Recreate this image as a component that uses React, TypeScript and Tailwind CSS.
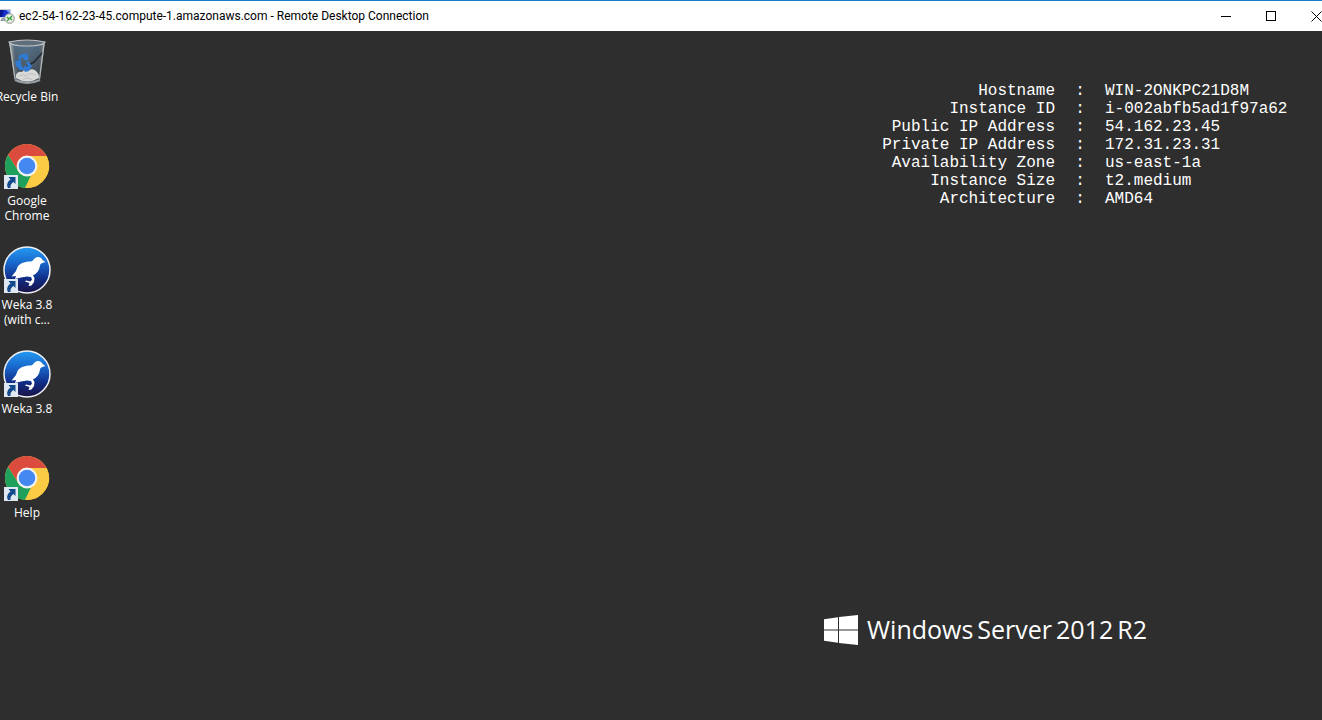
import type { ReactNode } from 'react';

const instanceInfo = [
  { label: 'Hostname', value: 'WIN-2ONKPC21D8M' },
  { label: 'Instance ID', value: 'i-002abfb5ad1f97a62' },
  { label: 'Public IP Address', value: '54.162.23.45' },
  { label: 'Private IP Address', value: '172.31.23.31' },
  { label: 'Availability Zone', value: 'us-east-1a' },
  { label: 'Instance Size', value: 't2.medium' },
  { label: 'Architecture', value: 'AMD64' },
];

function RemoteDesktopIcon() {
  return (
    <svg className="-ml-px h-4 w-4" viewBox="0 0 16 16" aria-hidden="true">
      <rect x="0" y="1" width="12" height="9" fill="#c9ced8" />
      <rect x="1" y="2" width="10" height="7" fill="#1a2fd0" />
      <path d="M1 2h4l-2 7H1z" fill="#0a1590" />
      <path d="M7 2h4v4z" fill="#6f9bf5" />
      <path d="M3 10h4l1 3H1z" fill="#9aa0aa" />
      <circle cx="10.5" cy="10.5" r="4.8" fill="#e9eee6" stroke="#8d9488" strokeWidth="1" />
      <path d="M8 9l2 2-2 2M13 8l-2 2 2 2" stroke="#2c9a2f" strokeWidth="1.3" fill="none" />
    </svg>
  );
}

function RecycleBinIcon() {
  return (
    <svg className="h-12 w-12" viewBox="0 0 48 48" aria-hidden="true">
      <defs>
        <linearGradient id="bin-glass" x1="0" x2="1" y1="0" y2="0">
          <stop offset="0" stopColor="#b4bcc2" />
          <stop offset="0.16" stopColor="#59656e" />
          <stop offset="0.5" stopColor="#667887" />
          <stop offset="0.82" stopColor="#414951" />
          <stop offset="1" stopColor="#969da2" />
        </linearGradient>
        <linearGradient id="bin-inner" x1="0" x2="0" y1="0" y2="1">
          <stop offset="0" stopColor="#53718a" />
          <stop offset="1" stopColor="#3f4850" />
        </linearGradient>
      </defs>
      <path d="M6 4 L11.500 42 Q24 49 37 42 L42 4 Z" fill="url(#bin-glass)" />
      <path d="M10 6 L15 39 H34 L38 6 Z" fill="url(#bin-inner)" opacity="0.8" />
      <path d="M13 37 Q15 33 19 34 Q22 30 26 32 Q31 30 34 34 Q36 36 36 40 Q24 47 13 40 Z" fill="#d9d9d8" />
      <path d="M16 38 Q20 35 23 38 Q28 34 33 37 M20 42 Q24 38 29 42" stroke="#bdbebe" strokeWidth="1" fill="none" />
      <path d="M40 14 L31 24 L24 28" stroke="#252c34" strokeWidth="1.8" fill="none" />
      <g fill="#2f7ad2">
        <path d="M15 20 L18 16 L22 16 L24 15 L26 22 L20 22 L21 20 L18 20 L17 23 Z" />
        <path d="M12 23 L18 22 L18 26 L21 32 L17 32 L13 28 Z" />
        <path d="M25 23 L29 28 L26 33 L22 34 L20 30 L23 27 L23 29 L25 28 L23 25 Z" />
      </g>
      <path d="M6 4 Q24 0 42 4 Q40 8 24 8 Q8 8 6 4 Z" fill="#5f6e79" stroke="#bfc4c8" strokeWidth="1.2" />
      <path d="M7 6 L12 41 M41 6 L36.500 41" stroke="#b5babc" strokeWidth="1.2" />
      <path d="M12 42 Q24 48 37 42" stroke="#9a9da0" strokeWidth="2" fill="none" />
    </svg>
  );
}

function ShortcutArrow() {
  return (
    <svg className="absolute bottom-0 left-0 h-4 w-4" viewBox="0 0 16 16" aria-hidden="true">
      <rect x="1" y="1" width="14" height="14" fill="#dfe8f1" />
      <path d="M5.500 3 H12.500 V10 L10.500 8 C8 9.500 7 11.500 7.500 14 H5 C3.300 11 4.500 7.500 7.500 5.500 Z" fill="#12498a" />
    </svg>
  );
}

function ChromeIcon() {
  return (
    <svg className="h-12 w-12" viewBox="0 0 48 48" aria-hidden="true">
      <circle cx="24" cy="24" r="22" fill="#fccb45" />
      <path d="M24 14 H43.600 A22 22 0 0 0 5 13 L15.340 29 Z" fill="#dc4c3e" />
      <path d="M5 13 L15.340 29 A10 10 0 0 0 28 33.200 L22 45.900 A22 22 0 0 1 5 13 Z" fill="#1fa15d" />
      <path d="M32.660 29 L22 45.900 A22 22 0 0 0 43.600 14 H24 Z" fill="#fccb45" />
      <circle cx="24" cy="24" r="10.400" fill="#f3f4f4" />
      <circle cx="24" cy="24" r="8.300" fill="#4688f2" />
    </svg>
  );
}

function WekaIcon() {
  return (
    <svg className="h-12 w-12" viewBox="0 0 48 48" aria-hidden="true">
      <defs>
        <linearGradient id="weka-sky" x1="0" x2="0" y1="0" y2="1">
          <stop offset="0" stopColor="#2499f2" />
          <stop offset="0.35" stopColor="#1968cc" />
          <stop offset="0.7" stopColor="#102b83" />
          <stop offset="1" stopColor="#1b1246" />
        </linearGradient>
      </defs>
      <circle cx="24" cy="24" r="23" fill="url(#weka-sky)" stroke="#eef0f6" strokeWidth="1.500" />
      <path
        d="M42.500 16 L39.500 14 C38.500 11.500 35.500 10.500 33 11.500 C30.500 12.500 30.500 15 28 15.500 C22 15.500 17 17 14.500 21 L13 25 L8.500 30.500 L13 30 L12 33 L18 31.500 L24 30.500 L28 31 L29 33.500 L27.500 35.500 L23 34.500 L22 35.500 L26.500 37 L25.500 40 L28.500 39.500 L31 36 L31.500 32 L30 29.500 C34 27.500 36.500 24 37 19.500 C37.500 17 40 17 42.500 16 Z"
        fill="#fff"
      />
    </svg>
  );
}

function WindowsLogo() {
  return (
    <svg className="h-[30px] w-[34px]" viewBox="0 0 34 30" fill="#fff" aria-hidden="true">
      <path d="M0 4.200 L14 2.200 V14.500 H0 Z" />
      <path d="M15 2 L34 0 V14.500 H15 Z" />
      <path d="M0 15.500 H14 V27.800 L0 25.800 Z" />
      <path d="M15 15.500 H34 V30 L15 28 Z" />
    </svg>
  );
}

const shortcuts: { id: string; lines: string[]; icon: ReactNode; linked: boolean }[] = [
  { id: 'recycle-bin', lines: ['Recycle Bin'], icon: <RecycleBinIcon />, linked: false },
  { id: 'chrome', lines: ['Google', 'Chrome'], icon: <ChromeIcon />, linked: true },
  { id: 'weka-console', lines: ['Weka 3.8', '(with c...'], icon: <WekaIcon />, linked: true },
  { id: 'weka', lines: ['Weka 3.8'], icon: <WekaIcon />, linked: true },
  { id: 'help', lines: ['Help'], icon: <ChromeIcon />, linked: true },
];

export default function App() {
  return (
    <div className="flex min-h-screen flex-col overflow-hidden bg-[#2e2e2e] font-['Open_Sans',sans-serif]">
      {/* Title bar */}
      <header className="flex h-[31px] items-center border-t border-[#1979ca] bg-white text-black">
        <RemoteDesktopIcon />
        <h1 className="ml-1 font-['Roboto',sans-serif] text-xs whitespace-nowrap">
          ec2-54-162-23-45.compute-1.amazonaws.com - Remote Desktop Connection
        </h1>
        <div className="-mr-[17px] ml-auto flex h-full">
          <button type="button" aria-label="Minimize" className="flex w-[45px] items-center justify-center">
            <svg className="h-[11px] w-[11px]" viewBox="0 0 11 11" shapeRendering="crispEdges">
              <path d="M0 5.500h10" stroke="#000" />
            </svg>
          </button>
          <button type="button" aria-label="Maximize" className="flex w-[45px] items-center justify-center">
            <svg className="h-[11px] w-[11px]" viewBox="0 0 11 11" shapeRendering="crispEdges">
              <path d="M.5.5h9v9h-9z" stroke="#000" fill="none" />
            </svg>
          </button>
          <button type="button" aria-label="Close" className="flex w-[45px] items-center justify-center">
            <svg className="h-[11px] w-[11px]" viewBox="0 0 11 11">
              <path d="M.5.5l10 10M10.500.5l-10 10" stroke="#000" />
            </svg>
          </button>
        </div>
      </header>

      {/* Desktop */}
      <main className="flex flex-1 justify-between text-white">
        <nav aria-label="Desktop" className="flex w-[54px] flex-col pt-[7px]">
          {shortcuts.map((s) => (
            <button key={s.id} type="button" className="flex h-26 flex-col items-center gap-[3px] text-xs leading-[15px]">
              <span className="relative block">
                {s.icon}
                {s.linked && <ShortcutArrow />}
              </span>
              <span className="flex flex-col items-center whitespace-nowrap">
                {s.lines.map((line) => (
                  <span key={line}>{line}</span>
                ))}
              </span>
            </button>
          ))}
        </nav>

        <div className="flex flex-col justify-between pt-[51px] pb-[75px]">
          <table className="ml-auto font-['Liberation_Mono',monospace] text-base leading-[18px]">
            <tbody>
              {instanceInfo.map((row) => (
                <tr key={row.label}>
                  <th scope="row" className="p-0 text-right font-normal">{row.label}</th>
                  <td className="w-[50px] p-0 text-center">:</td>
                  <td className="w-[217px] p-0">{row.value}</td>
                </tr>
              ))}
            </tbody>
          </table>

          <div className="mr-[175px] ml-auto flex items-start gap-[9px]">
            <WindowsLogo />
            <p className="flex gap-1 text-[25px] leading-[28px] whitespace-nowrap">
              <span>Windows</span> <span>Server</span> <span>2012</span> <span>R2</span>
            </p>
          </div>
        </div>
      </main>
    </div>
  );
}
